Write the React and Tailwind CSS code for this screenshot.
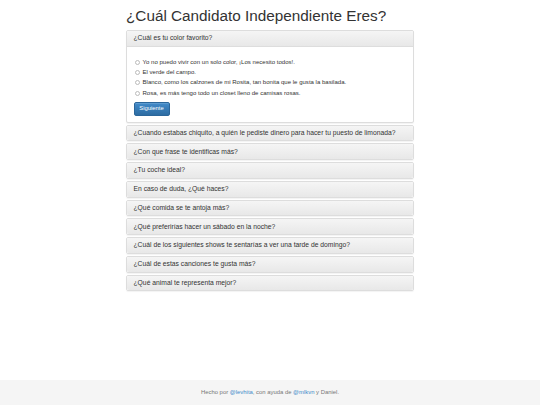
import React from 'react';

const questions = [
  '¿Cuando estabas chiquito, a quién le pediste dinero para hacer tu puesto de limonada?',
  '¿Con que frase te identificas más?',
  '¿Tu coche ideal?',
  'En caso de duda, ¿Qué haces?',
  '¿Qué comida se te antoja más?',
  '¿Qué preferirías hacer un sábado en la noche?',
  '¿Cuál de los siguientes shows te sentarías a ver una tarde de domingo?',
  '¿Cuál de estas canciones te gusta más?',
  '¿Qué animal te representa mejor?',
];

const options = [
  'Yo no puedo vivir con un solo color, ¡Los necesito todos!.',
  'El verde del campo.',
  'Blanco, como los calzones de mi Rosita, tan bonita que le gusta la basilada.',
  'Rosa, es más tengo todo un closet lleno de camisas rosas.',
];

const Heading = ({ children }) => (
  <div className="flex h-[15px] items-center rounded-t-[2px] bg-gradient-to-b from-[#f5f5f5] to-[#e8e8e8] px-[6.5px] text-[6.75px] text-[#333]">
    {children}
  </div>
);

const App = () => {
  return (
    <div className="flex min-h-[405px] flex-col bg-white font-['Liberation_Sans',Arial,sans-serif] text-[#333]">
      <main className="mx-auto w-[288px] flex-1">
        <h1 className="mt-[6px] mb-[4px] text-[15.3px] leading-[20px] font-normal whitespace-nowrap text-[#333]">¿Cuál Candidato Independiente Eres?</h1>
        <div className="flex flex-col gap-[2px]">
          <div className="rounded-[2px] border border-[#ddd] bg-white shadow-[0_1px_1px_rgba(0,0,0,0.05)]">
            <Heading>¿Cuál es tu color favorito?</Heading>
            <div className="border-t border-[#ddd] px-[6.5px] pt-[10px] pb-[6px]">
              <div className="flex flex-col">
                {options.map((o) => (
                  <label key={o} className="flex h-[10.4px] items-center gap-[3px] text-[6.05px] text-[#333]">
                    <span className="ml-[1px] h-[5px] w-[5px] rounded-full border border-[#bbb] bg-white" />
                    {o}
                  </label>
                ))}
              </div>
              <button className="mt-[3px] flex h-[14px] w-[36px] items-center justify-center rounded-[2px] border border-[#2b669a] bg-gradient-to-b from-[#428bca] to-[#2d6ca2] text-[5.9px] text-white shadow-[inset_0_1px_0_rgba(255,255,255,0.15)]">
                Siguiente
              </button>
            </div>
          </div>
          {questions.map((q) => (
            <div key={q} className="rounded-[2px] border border-[#ddd] shadow-[0_1px_1px_rgba(0,0,0,0.05)]">
              <div className="flex h-[14.75px] items-center rounded-[2px] bg-gradient-to-b from-[#f5f5f5] to-[#e8e8e8] px-[6.5px] text-[6.75px] text-[#333]">
                {q}
              </div>
            </div>
          ))}
        </div>
      </main>
      <footer className="flex h-[25px] items-center justify-center bg-[#f5f5f5] text-[5.9px] text-[#777]">
        <span>
          Hecho por <span className="text-[#428bca]">@levhita</span>, con ayuda de <span className="text-[#428bca]">@mlkvn</span> y Daniel.
        </span>
      </footer>
    </div>
  );
};

export default App;
